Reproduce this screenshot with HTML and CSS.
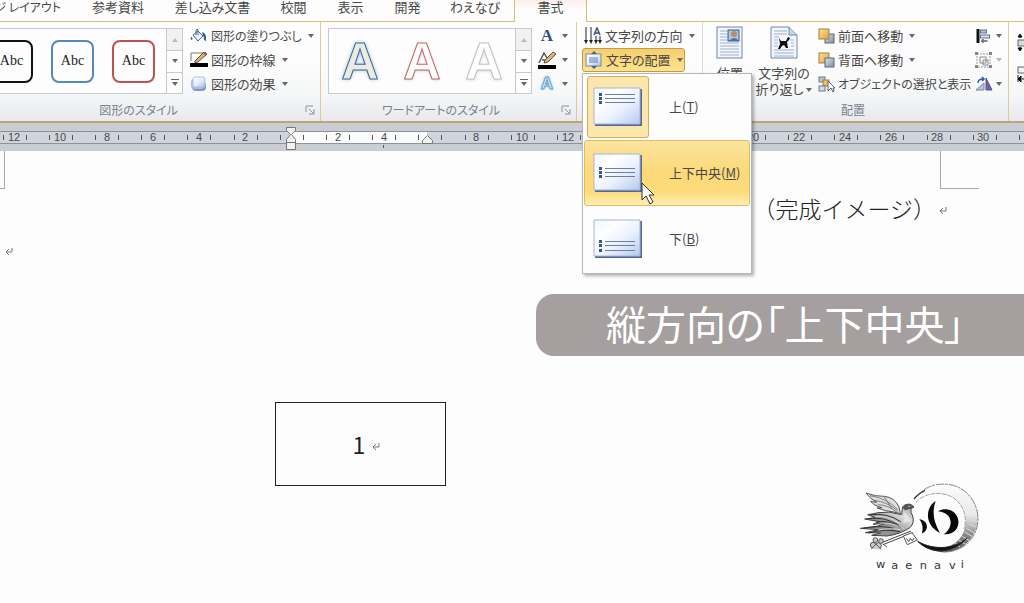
FILE: index.html
```
<!doctype html>
<html lang="ja">
<head>
<meta charset="UTF-8">
<title>縦方向の「上下中央」</title>
<link rel="stylesheet" href="styles.css">
</head>
<body>
	<!-- アイコン -->
	<svg class="defs" aria-hidden="true">
		<defs>
			<linearGradient id="gBlue" x1="0" y1="0" x2="1" y2="1">
				<stop offset="0" stop-color="#ffffff"/><stop offset=".5" stop-color="#e6eefb"/><stop offset="1" stop-color="#a9bfe6"/>
			</linearGradient>
			<linearGradient id="gThumb" x1="0" y1="0" x2="1" y2="1">
				<stop offset="0" stop-color="#f1f6fe"/><stop offset=".3" stop-color="#fdfeff"/><stop offset=".6" stop-color="#eaf1fd"/><stop offset="1" stop-color="#b4c9ef"/>
			</linearGradient>
			<linearGradient id="gGold" x1="0" y1="0" x2="1" y2="1">
				<stop offset="0" stop-color="#fbe3a0"/><stop offset="1" stop-color="#e0a032"/>
			</linearGradient>
			<linearGradient id="gSteel" x1="0" y1="0" x2="1" y2="1">
				<stop offset="0" stop-color="#dfe5ee"/><stop offset="1" stop-color="#7d8ba3"/>
			</linearGradient>
			<linearGradient id="gMoon" x1="0" y1="0" x2="0" y2="1">
				<stop offset="0" stop-color="#999" stop-opacity="0"/><stop offset=".45" stop-color="#999" stop-opacity=".2"/><stop offset=".75" stop-color="#777" stop-opacity=".9"/><stop offset="1" stop-color="#555"/>
			</linearGradient>
			<linearGradient id="gBody" x1="1" y1="0" x2="0" y2="1">
				<stop offset="0" stop-color="#999"/><stop offset=".3" stop-color="#ddd"/><stop offset=".6" stop-color="#8a8a8a"/><stop offset="1" stop-color="#aaa"/>
			</linearGradient>
		</defs>
		<symbol id="i-bucket" viewBox="0 0 18 16">
			<path d="M3 7 8 3l5 5-5 5z" fill="#e8eef8" stroke="#4c6590"/>
			<path d="M6 7V2q1-2 2 0v5" fill="none" stroke="#4c6590"/>
			<path d="M1 9q-1 3 1 3 1-1 0-3z" fill="#4c6590"/>
			<path d="M12 4q5 1 4 9-3-1-2-4l-1-1z" fill="#2d5e9e"/>
		</symbol>
		<symbol id="i-pen" viewBox="0 0 18 16">
			<path d="M1 9V1h12" fill="none" stroke="#777"/>
			<path d="M5 9 14 0l3 2-9 8-3 1z" fill="#dcb277" stroke="#6b4f33"/>
			<path d="M13 1l3 3 1-2-2-2z" fill="#a5524c"/>
			<path d="M0 11h18v4H0z" fill="#000"/>
		</symbol>
		<symbol id="i-effect" viewBox="0 0 18 16">
			<rect x="2" y="5" width="14" height="10" rx="4" fill="#8099c4"/>
			<rect x="1" y="3" width="13" height="10" rx="3" fill="#a8bddf"/>
			<rect x="3" y="1" width="12" height="10" rx="2" fill="url(#gBlue)" stroke="#b3c3de"/>
		</symbol>
		<symbol id="i-textpen" viewBox="0 0 18 18">
			<path d="M1 12 6 2l4 7M4 9h5" fill="none" stroke="#555" stroke-width="1.500"/>
			<path d="M7 9 15 1l3 2-8 8-4 1z" fill="#dcb277" stroke="#6b4f33"/>
			<path d="M0 14h18v4H0z" fill="#000"/>
		</symbol>
		<symbol id="i-direction" viewBox="0 0 18 18">
			<path d="M2 0v15M7 0v15M12 9v6M16 9v6" stroke="#222" fill="none"/>
			<path d="M0 13h4l-2 4zM5 13h4l-2 4zM10 13h4l-2 4zM14 13h4l-2 4z" fill="#222"/>
			<path d="M10 8l3-7 3 7M11 6h4" stroke="#3a5486" stroke-width="1.500" fill="none"/>
		</symbol>
		<symbol id="i-align" viewBox="0 0 18 18">
			<rect x="1" y="3" width="15" height="12" fill="url(#gBlue)" stroke="#7489ad"/>
			<path d="M4 7h9M4 9h9M4 11h9" stroke="#5f7eae"/>
			<path d="M6 3l3-3 3 3zM6 15l3 3 3-3z" fill="#3d6799"/>
		</symbol>
		<symbol id="i-front" viewBox="0 0 17 16">
			<rect x="7" y="6" width="9" height="9" fill="url(#gSteel)" stroke="#5b687e"/>
			<rect x="1" y="1" width="10" height="10" fill="url(#gGold)" stroke="#a5803d"/>
		</symbol>
		<symbol id="i-back" viewBox="0 0 17 16">
			<rect x="1" y="1" width="10" height="10" fill="url(#gGold)" stroke="#a5803d"/>
			<rect x="7" y="6" width="9" height="9" fill="url(#gSteel)" stroke="#5b687e"/>
		</symbol>
		<symbol id="i-select" viewBox="0 0 17 17">
			<rect x="1" y="1" width="6" height="5" fill="#b9c4d5" stroke="#6c7890"/>
			<rect x="5" y="4" width="6" height="6" fill="#edbd60" stroke="#a5803d"/>
			<rect x="1" y="10" width="6" height="5" fill="#d3dae6" stroke="#6c7890"/>
			<path d="M10 5v10l3-3 2 4 1-1-1-3h2z" fill="#fff" stroke="#56627a"/>
		</symbol>
		<symbol id="i-left" viewBox="0 0 17 16">
			<path d="M1 1h3v14H1z" fill="#111"/>
			<rect x="5" y="2" width="6" height="3" fill="#aebdd2" stroke="#66758c"/>
			<rect x="5" y="7" width="9" height="3" fill="#d5dfee" stroke="#66758c"/>
			<path d="M12 13H7M8 11l-2 2 2 2" stroke="#111" fill="none"/>
		</symbol>
		<symbol id="i-group" viewBox="0 0 18 17">
			<path d="M2 2h13v13H2z" fill="none" stroke="#999" stroke-dasharray="2 1"/>
			<path d="M5 5h6v6H5zM8 8h5v5H8z" fill="none" stroke="#888"/>
			<path d="M0 0h3v3H0zM14 0h3v3h-3zM0 13h3v3H0zM14 13h3v3h-3z" fill="#858585"/>
		</symbol>
		<symbol id="i-rotate" viewBox="0 0 18 16">
			<path d="M1 14h8V7z" fill="#b7c5dc" stroke="#7888a3"/>
			<path d="M11 14V2l6 12z" fill="#7360a8" stroke="#5b5391"/>
			<path d="M3 7q0-4 5-4M7 1l2 2-2 2" stroke="#2b5db0" stroke-width="1.500" fill="none"/>
		</symbol>
		<symbol id="i-page" viewBox="0 0 28 34">
			<rect x="1" y="1" width="25" height="31" fill="#f2f6fd" stroke="#7586a5"/>
			<path d="M4 5h7M4 8h7M4 11h7M4 14h7M4 17h19M4 20h19M4 23h19M4 26h19M4 29h19" stroke="#9eb0d0"/>
			<rect x="12" y="4" width="11" height="11" fill="#a9c7ea" stroke="#3d5480"/>
			<circle cx="18" cy="8" r="3" fill="#c08a62"/><path d="M13 15q5-6 10 0z" fill="#4a6ea8"/>
		</symbol>
		<symbol id="i-wrap" viewBox="0 0 28 34">
			<path d="M1 1h18l8 8v23H1z" fill="#f2f6fd" stroke="#7586a5"/>
			<path d="M19 1v8h8" fill="#c6d5ee" stroke="#7586a5"/>
			<path d="M4 5h13M4 8h13M4 11h5M4 14h4M4 17h4M4 20h4M20 14h4M21 17h3M21 20h3M4 24h20M4 27h20M4 30h20" stroke="#9eb0d0"/>
			<path d="M9 12l2 3h5l2-4 2 1-1 2-2 2 1 6h-2l-2-3-2 1-2 3H8l2-5z" fill="#111"/>
		</symbol>
		<symbol id="i-height" viewBox="0 0 18 18">
			<path d="M1 3l2-3 2 3zM1 14l2 3 2-3zM3 2v2M3 13v3" fill="#111" stroke="#111"/>
			<rect x="1" y="6" width="7" height="6" fill="#d3dae6" stroke="#666"/><path d="M7 1h7M7 16h7" stroke="#111"/>
		</symbol>
		<symbol id="i-width" viewBox="0 0 18 18">
			<rect x="1" y="1" width="12" height="6" fill="#eef1f6" stroke="#666"/>
			<path d="M1 9v7M4 10l-3 3 3 3z" fill="#111" stroke="#111"/><path d="M5 13h6" stroke="#111" stroke-dasharray="2 1"/>
		</symbol>
		<symbol id="i-launch" viewBox="0 0 10 10">
			<path d="M1 7V1h7" fill="none" stroke="#8a919d"/><path d="M4 4l4 4M9 4v5H4" fill="none" stroke="#8a919d"/>
		</symbol>
		<symbol id="i-return" viewBox="0 0 10 10">
			<path d="M8 1v4H2M5 2 2 5l3 3" fill="none" stroke="#777"/>
		</symbol>
		<symbol id="m-top" viewBox="0 0 50 40">
			<path d="M2 2h47v37H2z" fill="#52689a"/>
			<path d="M1 1h46v36H1z" fill="url(#gThumb)" stroke="#a9b5cb"/>
			<path d="M12 7.500h30M12 11.500h30M12 15.500h30" stroke="#6e7f9f"/>
			<path d="M6 6h3v3H6zM6 10h3v3H6zM6 14h3v3H6z" fill="#3c5580"/>
		</symbol>
		<symbol id="m-middle" viewBox="0 0 50 40">
			<path d="M2 2h47v37H2z" fill="#52689a"/>
			<path d="M1 1h46v36H1z" fill="url(#gThumb)" stroke="#a9b5cb"/>
			<path d="M12 15.500h30M12 19.500h30M12 23.500h30" stroke="#6e7f9f"/>
			<path d="M6 14h3v3H6zM6 18h3v3H6zM6 22h3v3H6z" fill="#3c5580"/>
		</symbol>
		<symbol id="m-bottom" viewBox="0 0 50 40">
			<path d="M2 2h47v37H2z" fill="#52689a"/>
			<path d="M1 1h46v36H1z" fill="url(#gThumb)" stroke="#a9b5cb"/>
			<path d="M12 22.500h30M12 26.500h30M12 31.500h30" stroke="#6e7f9f"/>
			<path d="M6 21h3v3H6zM6 25h3v3H6zM6 30h3v3H6z" fill="#3c5580"/>
		</symbol>
	</svg>

	<nav class="tabs">
		<button class="first">ページ レイアウト</button>
		<button>参考資料</button>
		<button>差し込み文書</button>
		<button>校閲</button>
		<button>表示</button>
		<button>開発</button>
		<button>わえなび</button>
		<button class="active">書式</button>
		<span class="rest"></span>
	</nav>

	<div class="ribbon">
		<section class="group group-shape">
			<div class="tools">
				<div class="gallery shapes">
					<div class="items">
						<button class="swatch black">Abc</button>
						<button class="swatch blue">Abc</button>
						<button class="swatch red">Abc</button>
					</div>
					<div class="scroll">
						<button class="off" aria-label="上へ"><i class="arrow up"></i></button>
						<button aria-label="下へ"><i class="arrow"></i></button>
						<button aria-label="その他"><i class="arrow more"></i></button>
					</div>
				</div>
				<div class="list">
					<button class="cmd tight"><svg width="18" height="16"><use href="#i-bucket"/></svg>図形の塗りつぶし<i class="arrow"></i></button>
					<button class="cmd"><svg width="18" height="16"><use href="#i-pen"/></svg>図形の枠線<i class="arrow"></i></button>
					<button class="cmd"><svg width="18" height="16"><use href="#i-effect"/></svg>図形の効果<i class="arrow"></i></button>
				</div>
			</div>
			<div class="caption"><span>図形のスタイル</span><button aria-label="図形の書式設定"><svg width="10" height="10"><use href="#i-launch"/></svg></button></div>
		</section>

		<section class="group group-art">
			<div class="tools">
				<div class="gallery arts">
					<div class="items">
						<button class="art art-blue">A</button>
						<button class="art art-red">A</button>
						<button class="art art-gray">A</button>
					</div>
					<div class="scroll">
						<button class="off" aria-label="上へ"><i class="arrow up"></i></button>
						<button aria-label="下へ"><i class="arrow"></i></button>
						<button aria-label="その他"><i class="arrow more"></i></button>
					</div>
				</div>
				<div class="list">
					<button class="cmd" aria-label="文字の塗りつぶし"><b class="fill-a">A</b><i class="arrow"></i></button>
					<button class="cmd" aria-label="文字の輪郭"><svg width="18" height="18"><use href="#i-textpen"/></svg><i class="arrow"></i></button>
					<button class="cmd" aria-label="文字の効果"><b class="glow-a">A</b><i class="arrow"></i></button>
				</div>
			</div>
			<div class="caption"><span>ワードアートのスタイル</span><button aria-label="文字の効果の設定"><svg width="10" height="10"><use href="#i-launch"/></svg></button></div>
		</section>

		<section class="group group-text">
			<div class="list">
				<button class="cmd"><svg width="18" height="18"><use href="#i-direction"/></svg>文字列の方向<i class="arrow"></i></button>
				<div class="dropdown">
					<button class="cmd open" aria-haspopup="true" aria-expanded="true"><svg width="18" height="18"><use href="#i-align"/></svg>文字の配置<i class="arrow"></i></button>
					<div class="menu" role="menu">
						<button role="menuitem" class="checked"><span class="thumb"><svg width="50" height="40"><use href="#m-top"/></svg></span><span>上(<u>T</u>)</span></button>
						<button role="menuitem" class="hover"><span class="thumb"><svg width="50" height="40"><use href="#m-middle"/></svg></span><span>上下中央(<u>M</u>)</span></button>
						<button role="menuitem"><span class="thumb"><svg width="50" height="40"><use href="#m-bottom"/></svg></span><span>下(<u>B</u>)</span></button>
						<svg class="pointer" width="16" height="24" viewBox="0 0 16 24" aria-hidden="true"><path d="M1 1v17l4-4 4 8 3-2-4-7h5z" fill="#fff" stroke="#333"/></svg>
					</div>
				</div>
			</div>
		</section>

		<section class="group group-arrange">
			<div class="tools">
				<button class="big"><svg width="28" height="34"><use href="#i-page"/></svg><span>位置</span></button>
				<button class="big"><svg width="28" height="34"><use href="#i-wrap"/></svg><span>文字列の<br>折り返し<i class="arrow"></i></span></button>
				<div class="list">
					<button class="cmd"><svg width="17" height="16"><use href="#i-front"/></svg>前面へ移動<i class="arrow"></i></button>
					<button class="cmd"><svg width="17" height="16"><use href="#i-back"/></svg>背面へ移動<i class="arrow"></i></button>
					<button class="cmd tight"><svg width="17" height="17"><use href="#i-select"/></svg>オブジェクトの選択と表示</button>
				</div>
				<div class="list mini">
					<button class="cmd" aria-label="配置"><svg width="18" height="16"><use href="#i-left"/></svg><i class="arrow"></i></button>
					<button class="cmd" aria-label="グループ化" disabled><svg width="18" height="17"><use href="#i-group"/></svg><i class="arrow"></i></button>
					<button class="cmd" aria-label="回転"><svg width="18" height="16"><use href="#i-rotate"/></svg><i class="arrow"></i></button>
				</div>
			</div>
			<div class="caption"><span>配置</span></div>
		</section>

		<section class="group group-size">
			<button aria-label="高さ"><svg width="18" height="18"><use href="#i-height"/></svg></button>
			<button aria-label="幅"><svg width="18" height="18"><use href="#i-width"/></svg></button>
		</section>
	</div>

	<!-- ルーラー -->
	<div class="ruler">
		<svg width="100%" height="28" aria-hidden="true">
			<rect y="8" width="100%" height="12" fill="#d0d4dd"/>
			<rect x="291" y="8" width="136" height="12" fill="#fcfcfc"/>
			<path d="M0 8.500H4000M0 20.500H4000" stroke="#8b929c"/>
			<path d="M3.500 12v5m23-5v5m23-5v5m23-5v5m23-5v5m23-5v5m23-5v5m23-5v5m23-5v5m23-5v5m24-5v5m23-5v5m23-5v5m23-5v5m23-5v5m23-5v5m23-5v5m23-5v5m23-5v5m23-5v5m24-5v5m23-5v5m23-5v5m23-5v5m23-5v5m23-5v5m23-5v5m23-5v5m23-5v5m23-5v5m24-5v5m23-5v5m23-5v5m23-5v5m23-5v5m23-5v5m23-5v5m23-5v5m23-5v5m23-5v5m24-5v5m23-5v5m23-5v5m23-5v5m23-5v5" fill="none" stroke="#555"/>
			<path d="M383.500 22v3" stroke="#555"/>
			<g class="nums">
				<text x="14" y="18">12</text><text x="60" y="18">10</text><text x="107" y="18">8</text><text x="153" y="18">6</text><text x="199" y="18">4</text><text x="245" y="18">2</text>
				<text x="338" y="18">2</text><text x="384" y="18">4</text><text x="476" y="18">8</text><text x="522" y="18">10</text><text x="568" y="18">12</text><text x="614" y="18">14</text><text x="661" y="18">16</text><text x="707" y="18">18</text><text x="753" y="18">20</text><text x="799" y="18">22</text><text x="845" y="18">24</text><text x="891" y="18">26</text><text x="937" y="18">28</text><text x="983" y="18">30</text>
			</g>
			<path d="M286.500 4.500h9v3l-4 4 4 5v10h-9v-10l4-5-4-4zM286.500 19.500h9" fill="#f1f1f1" stroke="#777"/>
			<path d="M422.500 20.500v-3l5-5 5 5v3z" fill="#f1f1f1" stroke="#777"/>
		</svg>
	</div>

	<main class="page">
		<i class="crop crop-left"></i>
		<i class="crop crop-right"></i>
		<p class="sample">（完成イメージ）<svg width="10" height="10"><use href="#i-return"/></svg></p>
		<p class="blank"><svg width="10" height="10"><use href="#i-return"/></svg></p>
		<div class="textbox">1<svg width="10" height="10"><use href="#i-return"/></svg></div>
		<div class="telop">縦方向の「上下中央」</div>
		<svg class="logo" width="140" height="105" viewBox="0 0 420 315" role="img" aria-label="waenavi">
			<!-- 月 -->
			<path d="M208 56C265 8 350 22 376 85C405 165 345 240 270 231C240 226 224 218 211 205C270 236 333 213 345 158C360 90 300 38 208 56z" fill="url(#gMoon)"/>
			<path d="M350 160l24 14M345 172l24 14M337 184l23 14M326 195l21 13M313 203l17 13M298 210l12 12M357 148l25 10M360 134l23 8" stroke="#ddd" stroke-width="3"/>
			<path d="M192 72Q208 53 225 46" fill="none" stroke="#333" stroke-width="4"/>
			<path d="M222 44C248 26 282 24 310 31C352 43 384 84 384 132C383 190 338 233 280 231" fill="none" stroke="#888" stroke-width="3" stroke-dasharray="25 2 9 3"/>
			<path d="M203 199C243 240 310 236 350 190C319 220 255 229 203 199z" fill="#111" stroke="#222" stroke-width="3"/>
			<path d="M198 82C228 49 288 45 322 78C343 100 352 130 342 162" fill="none" stroke="#777" stroke-width="2" stroke-dasharray="14 3"/>
			<path d="M208 132Q232 137 231 157Q229 171 216 175Q222 150 208 132z" fill="#080808"/>
			<path d="M257 78C226 97 222 150 270 174C251 142 245 111 257 78z" fill="#080808"/>
			<path d="M264 109C298 91 329 117 325 146C322 169 303 179 281 178C309 160 314 115 264 109z" fill="#080808"/>
			<!-- 鳥 -->
			<path d="M48 54Q77 65 103 64Q134 67 147 96L151 116Q131 110 107 107L81 99 96 98Q71 92 62 79L80 82Q59 70 48 54z" fill="#ddd" stroke="#555" stroke-width="3"/>
			<path d="M60 62Q112 70 143 104M72 76Q112 80 143 108M83 89Q116 90 141 112M103 66L125 100" fill="none" stroke="#555" stroke-width="2"/>
			<path d="M157 99Q162 87 177 87Q185 88 192 96L183 101Q181 113 188 123Q194 142 181 157Q154 177 111 183L65 181 92 174 46 173 86 164 31 160 81 154 105 145 69 148 88 140 44 132 76 128 53 119Q75 116 83 113 116 107 155 119z" fill="url(#gBody)" stroke="#444" stroke-width="3"/>
			<path d="M60 119Q112 113 152 140M55 131Q102 124 146 150M78 141Q120 134 154 158M40 160Q90 150 130 160M55 174Q110 160 150 170" fill="none" stroke="#333" stroke-width="3"/>
			<path d="M75 125Q112 119 149 146M91 145Q130 142 163 161M84 165Q123 158 151 164" fill="none" stroke="#eee" stroke-width="2"/>
			<path d="M156 96Q164 86 177 87L192 96 183 101 165 106z" fill="#555"/>
			<path d="M163 112Q178 122 181 142Q170 135 160 147z" fill="#e5e5e5"/>
			<circle cx="177" cy="94" r="2" fill="#fff"/>
			<!-- 鍵 -->
			<path d="M95 203L183 168M99 209L189 173" stroke="#444" stroke-width="3"/>
			<path d="M160 183l26-10 16 22-30 14zM169 190l7 10 5-10 6 8 5-9" fill="#fff" stroke="#555" stroke-width="3"/>
			<g fill="#ccc" stroke="#555" stroke-width="3"><circle cx="76" cy="195" r="7"/><circle cx="69" cy="210" r="8"/><circle cx="85" cy="212" r="9"/><circle cx="93" cy="198" r="7"/><path d="M64 222l14-15 15 16M98 207l13 9"/></g>
			<text class="brand" x="78 124 166 209 252 297 332" y="278 281 282 283 282 281 279">waenavi</text>
		</svg>
	</main>
</body>
</html>
```
FILE: styles.css
```
*{ margin:0; padding:0; box-sizing:border-box;}
body{
	display:flex;
	flex-direction:column;
	min-height:100vh;
	overflow:hidden;
	background-color:#fdfdfd;
	color:#484848;
	font:13px/24px "Noto Sans CJK JP",sans-serif;
	font-feature-settings:"palt";
}
button{
	border:none;
	background:none;
	color:inherit;
	font:inherit;
	font-feature-settings:inherit;
	white-space:nowrap;
}
svg{
	display:block;
	flex:none;
}
.defs{
	position:absolute;
	width:0;
	height:0;
}

/* タブ */
.tabs{
	display:grid;
	grid-template-columns:76px 84px 105px 57px 57px 57px 78px 73px 1fr;
	height:22px;
}
.tabs button,.tabs .rest{
	height:22px;
	border-bottom:1px solid #d8bd78;
	line-height:14px;
	padding-bottom:8px;
}
.tabs .first{
	display:flex;
	justify-content:flex-end;
	padding-right:15px;
	overflow:hidden;
	font-size:12px;
}
.tabs .active{
	border:solid #d8bd78;
	border-width:0 1px;
	background:linear-gradient(#fbeeea,#fdfdfd 10px);
}

/* リボン */
.ribbon{
	display:flex;
	height:101px;
	border-bottom:2px solid #bba67c;
	background:linear-gradient(#fdfdfd 40%,#f5f6f7 75%,#e7e9ec);
}
.group{
	display:flex;
	flex-direction:column;
	flex:none;
	padding-top:2px;
	border-right:1px solid #dccb9c;
}
.tools{
	display:flex;
	height:76px;
}
.list{
	display:flex;
	flex-direction:column;
	align-items:flex-start;
}
.cmd{
	display:flex;
	align-items:center;
	height:24px;
	gap:3px;
}
.cmd.tight{
	font-size:12px;
}
.arrow{
	display:inline-block;
	flex:none;
	margin-left:3px;
	border:solid transparent;
	border-width:4px 3px 0;
	border-top-color:#666;
}
.caption{
	display:flex;
	align-items:center;
	height:20px;
	padding-right:5px;
	color:#7b828d;
	font-size:12px;
	line-height:20px;
}
.caption span{
	flex:1;
	text-align:center;
}
.gallery{
	display:flex;
	height:66px;
	margin-top:4px;
	border:1px solid #c8cacd;
	background-color:#fdfdfd;
}
.gallery .items{
	display:flex;
	flex:1;
	align-items:center;
	justify-content:flex-end;
	overflow:hidden;
}
.scroll{
	display:grid;
	grid-template-rows:repeat(3,1fr);
	width:16px;
	border-left:1px solid #c8cacd;
}
.scroll button{
	display:flex;
	flex-direction:column;
	align-items:center;
	justify-content:center;
}
.scroll button+button{
	border-top:1px solid #c8cacd;
}
.scroll .arrow{
	margin:0;
}
.scroll .off{
	background-color:#f1f1f2;
}
.scroll .up{
	border-width:0 3px 4px;
	border-bottom-color:#bbb;
}
.scroll button:last-child::before{
	content:'';
	width:8px;
	height:1px;
	margin-bottom:2px;
	background-color:#666;
}

.group-shape{
	width:321px;
}
.group-shape .tools{
	gap:7px;
}
.shapes{
	width:183px;
	border-left:none;
}
.shapes .items{
	gap:18px;
	padding-right:11px;
}
.group-shape .caption span{
	padding-right:28px;
}
.swatch{
	flex:none;
	width:43px;
	height:43px;
	border:2px solid #111;
	border-radius:8px;
	color:#222;
	font:14px "Liberation Serif",serif;
}
.swatch.blue{
	border-color:#5588bb;
}
.swatch.red{
	border-color:#bd5350;
}

.group-art{
	width:256px;
}
.group-art .tools{
	gap:6px;
	padding-left:7px;
}
.arts{
	width:204px;
}
.arts .items{
	justify-content:space-around;
}
.art{
	width:60px;
	font:bold 52px/64px "Liberation Sans",sans-serif;
}
.art-blue{
	color:#ebebe2;
	-webkit-text-stroke:1px #41698f;
	text-shadow:0 0 4px #8ab4dd;
}
.art-red{
	color:#fff;
	-webkit-text-stroke:1px #c66762;
	text-shadow:0 1px 3px #ccc;
}
.art-gray{
	color:#fff;
	-webkit-text-stroke:1px #c4c4c4;
	text-shadow:0 1px 3px #ccc;
}
.fill-a,.glow-a{
	width:18px;
	color:#334d82;
	font:bold 17px "Liberation Serif",serif;
}
.glow-a{
	color:#e7f4fc;
	font-family:"Liberation Sans",sans-serif;
	-webkit-text-stroke:1px #5fa0cc;
	text-shadow:0 0 3px #6db5e2;
}

.group-text{
	width:126px;
	padding-left:5px;
	border-right-color:#d9dadd;
}
.group-text .cmd{
	padding:0 3px 0 2px;
}
.dropdown{
	position:relative;
}
.cmd.open{
	width:103px;
	border:1px solid #c39c40;
	border-radius:3px;
	background:linear-gradient(#f5cf70,#fde38a);
}
.menu{
	position:absolute;
	z-index:2;
	top:25px;
	left:0;
	width:170px;
	padding:0 1px 1px;
	border:1px solid #b3b6bb;
	background-color:#fdfdfd;
	box-shadow:2px 2px 3px rgba(0,0,0,.3);
}
.menu button{
	display:flex;
	align-items:center;
	gap:20px;
	width:100%;
	height:66px;
	padding-left:2px;
	border:1px solid transparent;
	border-radius:3px;
}
.menu .thumb{
	display:flex;
	align-items:center;
	justify-content:center;
	width:62px;
	height:62px;
	border:1px solid transparent;
	border-radius:3px;
}
.menu .checked .thumb{
	border-color:#d4ad58;
	background-color:#fbe6ae;
}
.menu .hover{
	border-color:#dfbc5c;
	background:linear-gradient(#fbe3a0,#fcd978 50%,#fddb7c 80%,#feeeb5);
}
.pointer{
	position:absolute;
	top:108px;
	left:58px;
}

.group-arrange{
	width:306px;
}
.big{
	display:flex;
	flex:none;
	flex-direction:column;
	align-items:center;
	width:54px;
	padding-top:2px;
	line-height:16px;
}
.big span{
	margin-top:5px;
}
.big .arrow{
	vertical-align:2px;
}
.group-arrange .list{
	margin-left:7px;
}
.group-arrange .mini{
	margin-left:auto;
	padding-right:6px;
}
.mini .arrow{
	margin-left:0;
}
.mini :disabled .arrow{
	border-top-color:#bbb;
}
.group-size{
	flex:1;
	min-width:0;
	gap:14px;
	padding:12px 0 0 8px;
	border-right:none;
	overflow:hidden;
}
.group-size button{
	align-self:flex-start;
}

/* ルーラー */
.ruler{
	height:28px;
	background-color:#caced2;
}
.nums{
	fill:#4a4a4a;
	font:11px "Liberation Sans",sans-serif;
	text-anchor:middle;
}

/* 文書 */
.page{
	position:relative;
	flex:1;
	color:#222;
}
.crop{
	position:absolute;
	top:0;
	height:38px;
	border:solid #aaa;
}
.crop-left{
	left:0;
	width:5px;
	border-width:0 1px 1px 0;
}
.crop-right{
	right:45px;
	width:39px;
	border-width:0 0 1px 1px;
}
.sample,.blank,.textbox{
	display:flex;
	align-items:center;
	gap:2px;
	font-size:23px;
	font-weight:300;
	font-feature-settings:normal;
}
.sample{
	justify-content:flex-end;
	height:42px;
	margin-top:36px;
	padding-right:76px;
}
.sample svg,.textbox svg{
	margin-top:5px;
}
.blank{
	height:46px;
	padding-left:4px;
}
.textbox{
	position:absolute;
	top:251px;
	left:275px;
	justify-content:center;
	gap:6px;
	width:171px;
	height:84px;
	padding-left:13px;
	border:1px solid #222;
	font-weight:400;
}
.telop{
	position:absolute;
	top:143px;
	right:0;
	width:488px;
	padding:0 0 4px 70px;
	border-radius:18px 0 0 18px;
	background-color:#a5a09f;
	color:#fff;
	font-size:40px;
	line-height:58px;
	white-space:nowrap;
}
.logo{
	position:absolute;
	right:34px;
	bottom:23px;
}
.brand{
	fill:#333;
	font:34px "DejaVu Sans",sans-serif;
}
```
